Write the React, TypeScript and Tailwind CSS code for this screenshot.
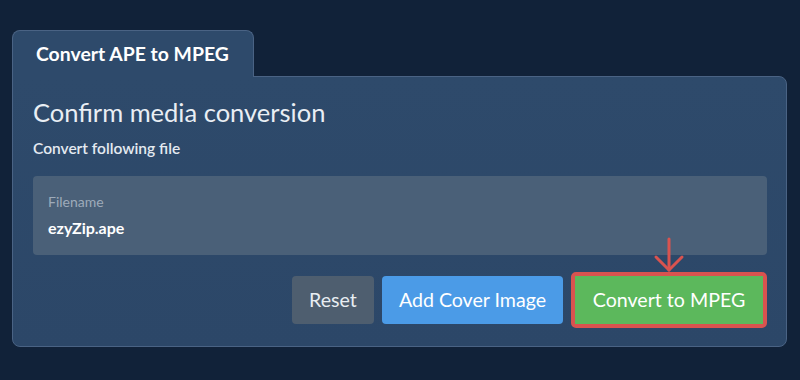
const App = () => {
  return (
    <div className="w-[800px] h-[380px] bg-[#112239] pt-[30px] pl-[12px] pr-[13px] font-['Lato','Noto_Sans',sans-serif]">
      <div className="flex">
        <div className="relative z-10 -mb-px h-[47px] flex items-center pl-[23px] pr-[24px] bg-[#2e4a6b] border border-b-0 border-[#4a6384] rounded-t-lg">
          <span className="whitespace-nowrap text-[19.4px] font-bold text-white leading-none">Convert APE to MPEG</span>
        </div>
      </div>
      <div className="bg-gradient-to-b from-[#2e4a6b] to-[#2c4768] border border-[#4a6384] rounded-b-lg rounded-tr-lg pl-[20px] pr-[19px] pt-[20px] pb-[18px]">
        <h1 className="text-[25.5px] leading-[30px] text-[#e9eef4]">Confirm media conversion</h1>
        <p className="mt-[11px] text-[15.5px] leading-[20px] font-semibold text-[#e4eaf1]">Convert following file</p>
        <div className="mt-[18px] bg-[#4a6078] rounded-[4px] px-[15px] pt-[16px] pb-[17px]">
          <div className="text-[14px] leading-[19px] text-[#9eabba]">Filename</div>
          <div className="mt-[6px] text-[16px] leading-[21px] font-bold text-white">ezyZip.ape</div>
        </div>
        <div className="mt-[17px] flex items-center justify-end gap-2">
          <button className="h-[48px] w-[82px] rounded-[4px] bg-[#4e5e6f] text-[19.6px] text-[#e8edf2]">Reset</button>
          <button className="h-[48px] w-[181px] rounded-[4px] bg-[#4b9be7] text-[19.6px] text-white">Add Cover Image</button>
          <div className="relative border-4 border-[#d9534f] rounded-[5px]">
            <svg className="absolute left-1/2 -translate-x-1/2 -top-[39px]" width="32" height="36" viewBox="0 0 32 36" fill="none" stroke="#d9534f" strokeWidth="3" strokeLinecap="round" strokeLinejoin="round">
              <path d="M16 2 V33" />
              <path d="M3 20 L16 33 L29 20" />
            </svg>
            <button className="block h-[48px] w-[188px] bg-[#5cb85c] text-[19.6px] text-white">Convert to MPEG</button>
          </div>
        </div>
      </div>
    </div>
  );
};

export default App;
